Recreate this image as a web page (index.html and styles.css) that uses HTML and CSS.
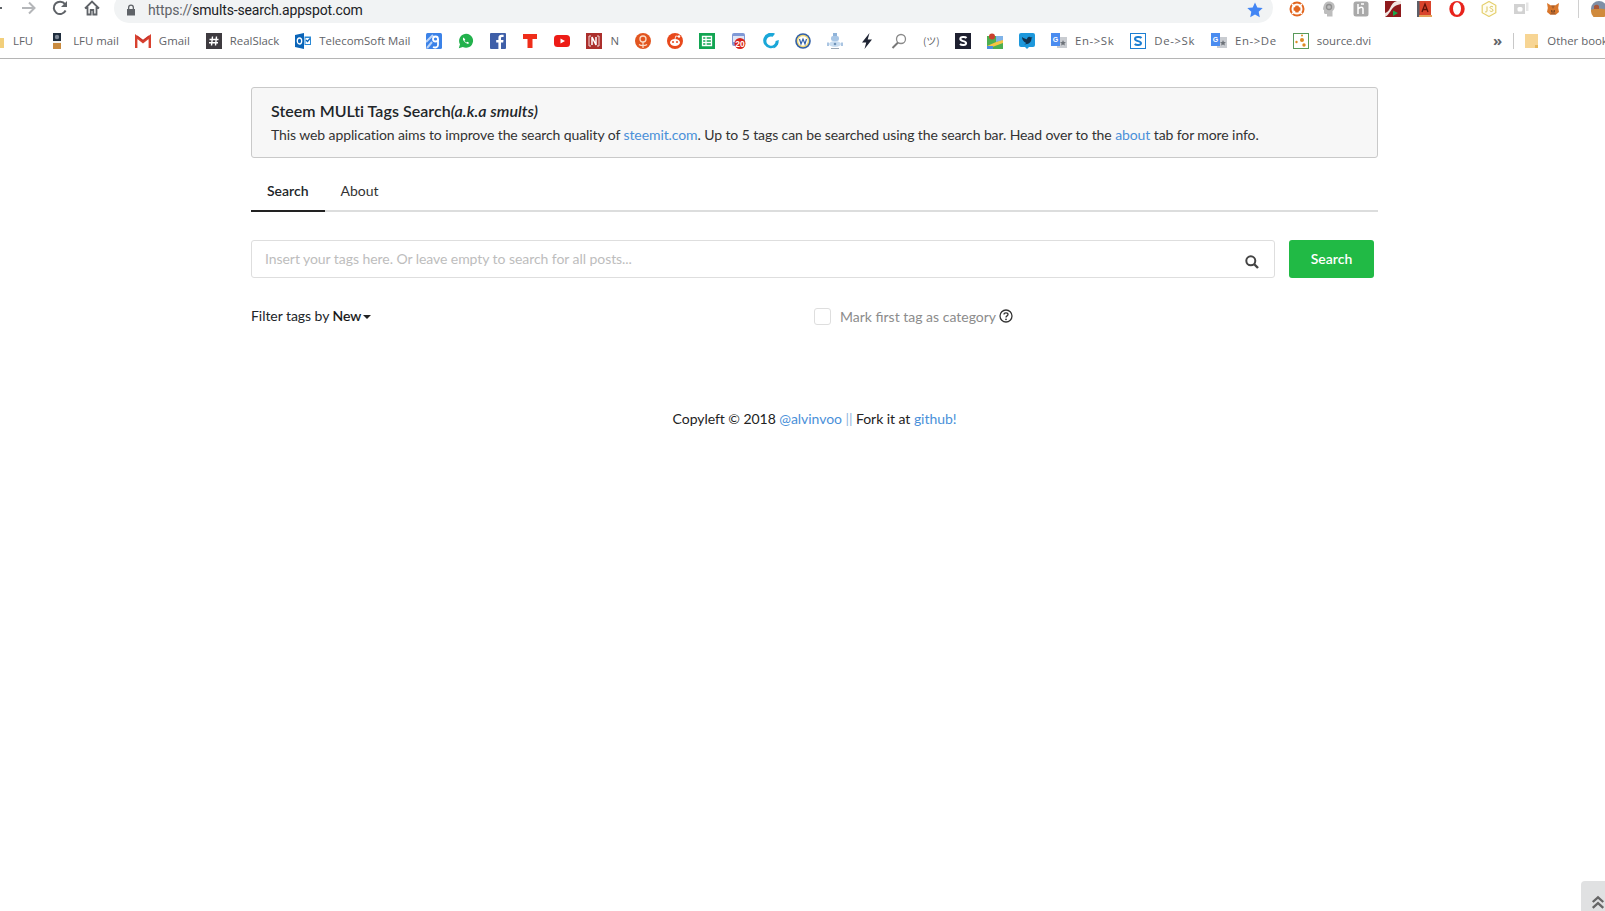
FILE: index.html
```html
<!DOCTYPE html>
<html lang="en">
<head>
<meta charset="utf-8">
<title>Steem MULti Tags Search</title>
<link rel="stylesheet" href="styles.css">
</head>
<body>
<header class="chrome">
  <div class="toolbar">
    <svg class="nav nav-back" viewBox="0 0 16 16"><path d="M15 8H3M8 2.500 2.500 8 8 13.500" fill="none" stroke="#5f6368" stroke-width="2"/></svg>
    <svg class="nav nav-fwd" viewBox="0 0 16 16"><path d="M1 8h12.500M8 2.500 13.500 8 8 13.500" fill="none" stroke="#b4b6b9" stroke-width="2"/></svg>
    <svg class="nav nav-reload" viewBox="0 0 16 16"><path d="M13.600 10.500A6.200 6.200 0 1 1 13 4.200" fill="none" stroke="#5f6368" stroke-width="2"/><path d="M15 1v6H9z" fill="#5f6368"/></svg>
    <svg class="nav nav-home" viewBox="0 0 16 16"><path d="M1 8.500 8 1.500l7 7M3.500 7v7.500h3.200V10h2.600v4.500h3.200V7" fill="none" stroke="#5f6368" stroke-width="1.800"/></svg>
    <div class="omnibox">
      <svg class="lock" viewBox="0 0 10 12"><path d="M2 5V3.500a3 3 0 0 1 6 0V5h1v6.500H1V5zm1.300 0h3.400V3.500a1.700 1.700 0 0 0-3.400 0z" fill="#5f6368"/></svg>
      <span class="url"><span class="url-scheme">https://</span>smults-search.appspot.com</span>
      <svg class="star" viewBox="0 0 16 16"><path d="M8 .5l2.300 5 5.400.6-4 3.700 1.100 5.400L8 12.500l-4.800 2.700 1.100-5.400-4-3.700 5.400-.6z" fill="#4285f4"/></svg>
    </div>
    <div class="exts">
      <svg class="ic" viewBox="0 0 16 16"><circle cx="8" cy="8" r="7.500" fill="#e2661f"/><circle cx="8" cy="8" r="4.500" fill="none" stroke="#fff" stroke-width="2"/><path d="M3 3l3 3M13 3l-3 3M3 13l3-3M13 13l-3-3" stroke="#fff" stroke-width="1.500"/></svg>
      <svg class="ic ic-narrow" viewBox="0 0 12 16"><path d="M6 .5c3.500 0 5.700 2.300 5.700 5.300 0 2-1 3.200-2.200 4.200V15.500H4V13H2.500C1.500 13 1 12.300 1 11.500V9L0 8.500C.5 3 2.500.5 6 .5z" fill="#bdbdbd"/><circle cx="6" cy="6" r="2.500" fill="none" stroke="#8f8f8f" stroke-width="1.300"/></svg>
      <svg class="ic" viewBox="0 0 16 16"><rect x=".5" y=".5" width="15" height="15" rx="2.500" fill="#a9a9a9"/><path d="M5 3v10M5 8c2-2.500 5-2.500 5 0v5M8 3h3" fill="none" stroke="#fff" stroke-width="1.500"/></svg>
      <svg class="ic" viewBox="0 0 16 16"><rect width="16" height="16" fill="#8e1a1c"/><path d="M0 16C7 12 5 5 16 3V0H12C4 2 7 10 0 12z" fill="#f1e6e2"/><path d="M8 9.500l5 2.500-5 3z" fill="#19a84a"/></svg>
      <svg class="ic" viewBox="0 0 16 16"><rect width="14" height="15" fill="#d9442c"/><rect width="2.500" height="16" fill="#5c5f68"/><path d="M5 11 8 3l3 8M6.200 8.500h3.600" fill="none" stroke="#5e1208" stroke-width="1.300"/><rect x="2" y="14" width="13" height="2" fill="#e4a35b"/></svg>
      <svg class="ic" viewBox="0 0 16 16"><ellipse cx="8" cy="8" rx="7.700" ry="8" fill="#e8231c"/><ellipse cx="8" cy="7.500" rx="4" ry="6.300" fill="#fff"/></svg>
      <svg class="ic" viewBox="0 0 16 16"><path d="M8 .5 14.800 4.300v7.400L8 15.500 1.200 11.700V4.300z" fill="#fffdf2" stroke="#e5cf6c" stroke-width="1.200"/><path d="M6 5.500V10c0 1.200-1.500 1.200-2 .5M12 6c-1-1-3-.8-3 .5s3 1 3 2.700-2.300 1.500-3.300.5" fill="none" stroke="#dcc65e" stroke-width="1"/></svg>
      <svg class="ic" viewBox="0 0 16 16"><path d="M1 3h11v10H1z" fill="#d2d2d2"/><path d="M13 1.500h2.500V10H13z" fill="#e6e6e6"/><rect x="4.500" y="6" width="5" height="4.500" rx="1.500" fill="#fff"/></svg>
      <svg class="ic ic-narrow" viewBox="0 0 12 16"><path d="M0 2l4 2.500h4L12 2l-.8 5 .8 4-3 2.500H3L0 11l.8-4z" fill="#d9772c"/><path d="M4 4.500 6 8l2-3.500zM3 13.500 6 9l3 4.500z" fill="#a85f2c"/><path d="M4 10h1.200M6.800 10H8" stroke="#2b2520" stroke-width="1.200"/></svg>
      <span class="ext-sep"></span>
      <svg class="avatar" viewBox="0 0 16 16"><circle cx="8" cy="8" r="8" fill="#7f8fa6"/><path d="M0 9c4-2 11-2 16 0v1a8 8 0 0 1-16 0z" fill="#d08a3c"/><path d="M3 5c2-2 4-1 5 0v3H3z" fill="#a9573a"/></svg>
    </div>
  </div>
  <nav class="bookmarks">
    <a class="bm bm-first"><svg class="ic" viewBox="0 0 16 16"><path d="M1 3h6l2 2h6v10H1z" fill="#f2cf7b"/></svg><span>LFU</span></a>
    <a class="bm"><svg class="ic" viewBox="0 0 16 16"><rect x="4" width="8" height="8" fill="#1f2d3d"/><circle cx="8" cy="4" r="2.200" fill="#7d8896"/><rect x="4" y="8" width="8" height="2" fill="#f2f2f2"/><rect x="4" y="10" width="8" height="6" fill="#c98a3e"/></svg><span>LFU mail</span></a>
    <a class="bm"><svg class="ic" viewBox="0 0 16 16"><path d="M1.200 15V3.500L8 9l6.800-5.500V15" fill="none" stroke="#d8412f" stroke-width="2.400"/><path d="M2 3 8 7.500 14 3" fill="none" stroke="#c8322a" stroke-width="1.200"/></svg><span>Gmail</span></a>
    <a class="bm"><svg class="ic" viewBox="0 0 16 16"><rect width="16" height="16" fill="#3e3b40"/><path d="M6.500 3.500 5.500 12.500M10.500 3.500l-1 9M3.500 6.500h9M3 9.800h9" stroke="#fff" stroke-width="1.400"/></svg><span>RealSlack</span></a>
    <a class="bm"><svg class="ic" viewBox="0 0 16 16"><path d="M0 2 9 0v16L0 14z" fill="#0a64b8"/><ellipse cx="4.500" cy="8" rx="2.200" ry="3" fill="none" stroke="#fff" stroke-width="1.300"/><path d="M9.500 3.500H16V12H9.500z" fill="#2b8ad6"/><path d="M10.500 5h4.500v6h-4.500z" fill="#fff"/><path d="M11 7l1.500 1.500L15 5.500" fill="none" stroke="#0a64b8" stroke-width="1.200"/></svg><span>TelecomSoft Mail</span></a>
    <a class="bm"><svg class="ic" viewBox="0 0 16 16"><rect width="16" height="16" rx="1.500" fill="#3b82e8"/><path d="M0 9 7 2M1 15l5-6" stroke="#bcd4f7" stroke-width="2"/><circle cx="9.500" cy="6" r="2.500" fill="none" stroke="#fff" stroke-width="1.800"/><path d="M12 6v6c0 2.500-3 3-5 2" fill="none" stroke="#fff" stroke-width="1.800"/></svg></a>
    <a class="bm"><svg class="ic" viewBox="0 0 16 16"><path d="M.8 15.200 2 11.300A7 7 0 1 1 4.800 14z" fill="#22b14c"/><path d="M5.500 4.500c-1.500 1.500.3 3.800 1.500 4.800 1.300 1.200 3.300 2.300 4.200.8l-1.700-1.400-1 .7C7.500 9.300 6.800 8.500 6.500 7.600l.8-1z" fill="#fff"/></svg></a>
    <a class="bm"><svg class="ic" viewBox="0 0 16 16"><rect width="16" height="16" rx="1" fill="#3f5fa8"/><path d="M11 16V9.500h2.200l.3-2.600H11V5.300c0-.8.300-1.200 1.300-1.200h1.300V1.800h-2C9.500 1.800 8.400 3 8.400 5v1.900H6.200v2.600h2.200V16z" fill="#fff"/></svg></a>
    <a class="bm"><svg class="ic" viewBox="0 0 16 16"><path d="M1 1h14v5h-4.500v9h-5V6H1z" fill="#ef2d1a"/></svg></a>
    <a class="bm"><svg class="ic" viewBox="0 0 16 16"><rect y="2" width="16" height="12" rx="3.500" fill="#ed1c16"/><path d="M6.500 5.500 11 8l-4.500 2.500z" fill="#fff"/></svg></a>
    <a class="bm"><svg class="ic" viewBox="0 0 16 16"><rect width="16" height="16" fill="#ab2f2c"/><path d="M5 3H3v10h2M11 3h2v10h-2" fill="none" stroke="#f3d9d7" stroke-width="1"/><path d="M6 12V4l4 8V4" fill="none" stroke="#fff" stroke-width="1.500"/></svg><span>N</span></a>
    <a class="bm"><svg class="ic" viewBox="0 0 16 16"><circle cx="8" cy="8" r="8" fill="#e2551f"/><circle cx="8" cy="6" r="3" fill="none" stroke="#fbdcc7" stroke-width="1.300"/><path d="M8 9v6M4 11.500c2 1.500 6 1.500 8 0" fill="none" stroke="#fbdcc7" stroke-width="1.200"/></svg></a>
    <a class="bm"><svg class="ic" viewBox="0 0 16 16"><circle cx="8" cy="8" r="8" fill="#e8491c"/><ellipse cx="8" cy="9.500" rx="5" ry="3.500" fill="#fff"/><circle cx="6" cy="9" r="1" fill="#e8491c"/><circle cx="10" cy="9" r="1" fill="#e8491c"/><circle cx="12" cy="3.500" r="1.200" fill="#fff"/><path d="M8 6 8.800 3l3 .5" fill="none" stroke="#fff" stroke-width=".8"/></svg></a>
    <a class="bm"><svg class="ic" viewBox="0 0 16 16"><rect width="16" height="16" fill="#12a552"/><path d="M3.500 3.500h9v9h-9zM3.500 6.500h9M3.500 9.500h9M7 3.500v9" fill="none" stroke="#fff" stroke-width="1.300"/></svg></a>
    <a class="bm"><svg class="ic" viewBox="0 0 16 16"><rect x="1" width="13" height="13" rx="2" fill="#8099d6"/><rect x="2" y="3" width="11" height="6" fill="#dfe5f5"/><circle cx="9" cy="10.500" r="5.500" fill="#d8231b"/><text class="cal-num" x="9" y="13.500" text-anchor="middle">20</text></svg></a>
    <a class="bm"><svg class="ic" viewBox="0 0 16 16"><path d="M12 .8A7.800 7.800 0 1 0 15.800 7l-3.200 1a4.600 4.600 0 1 1-3-4.200z" fill="#1aa7d8"/><path d="M15.500 9c-.3 3-2.300 5.500-5 6.500l1.500-3z" fill="#1aa7d8"/></svg></a>
    <a class="bm"><svg class="ic" viewBox="0 0 16 16"><circle cx="8" cy="8" r="7.800" fill="#315fa8"/><circle cx="8" cy="8" r="6.200" fill="#f0d876"/><circle cx="8" cy="8" r="4.800" fill="#fff"/><path d="M4.500 6 6 11l2-5 2 5 1.500-5" fill="none" stroke="#315fa8" stroke-width="1.200"/></svg></a>
    <a class="bm"><svg class="ic" viewBox="0 0 16 16"><rect x="6" width="4" height="3" fill="#8fb3d9"/><rect x="4" y="3" width="8" height="5" rx="2" fill="#a8c6e5"/><ellipse cx="8" cy="11" rx="6" ry="3" fill="#c9ddf0"/><path d="M1 13V9.500M15 13V9.500" stroke="#8fb3d9" stroke-width="1.500"/><rect x="4" y="15" width="8" height="1" fill="#9aa7b5"/><circle cx="8" cy="11" r="1.300" fill="#6f93b8"/></svg></a>
    <a class="bm"><svg class="ic" viewBox="0 0 16 16"><path d="M10.500 0 3 9.500h4.200L5.500 16 13 6.500H8.700z" fill="#1f2433"/></svg></a>
    <a class="bm"><svg class="ic" viewBox="0 0 16 16"><circle cx="10" cy="6" r="4.500" fill="none" stroke="#8a8a8a" stroke-width="1.300"/><path d="M7 9.500 1.500 15" stroke="#777" stroke-width="2"/></svg></a>
    <a class="bm"><span class="bm-glyph">(ツ)</span></a>
    <a class="bm"><svg class="ic" viewBox="0 0 16 16"><rect width="16" height="16" fill="#1e2030"/><path d="M11.500 5C10.500 3.800 5.300 3.500 5.300 6c0 2.800 5.800 1.500 5.800 4.300 0 2.200-4.800 2-6.100.7" fill="none" stroke="#fff" stroke-width="2"/></svg></a>
    <a class="bm"><svg class="ic" viewBox="0 0 16 16"><rect y="3" width="16" height="13" fill="#4caf50"/><path d="M0 13 16 6v4L0 16z" fill="#f6c344"/><path d="M9 3h7v4L9 9z" fill="#7fb3e8"/><path d="M0 13h6v3H0z" fill="#4b8fe0"/><circle cx="5" cy="3.500" r="3" fill="#c9402e"/></svg></a>
    <a class="bm"><svg class="ic" viewBox="0 0 16 16"><rect width="16" height="14" rx="2" fill="#1d98dc"/><path d="M6 14h4l-2 2z" fill="#1d98dc"/><path d="M3 4c2 1.500 3.500 2 5 2.200C8 3.800 10.500 3 12 4.500l1.500-.5-1 1.500C12.500 9 9.500 12 5 11c1 0 2-.5 2.500-1C5.500 9.500 3 7 3 4z" fill="#12334f"/></svg></a>
    <a class="bm"><svg class="ic" viewBox="0 0 16 16"><rect x="6" y="4" width="10" height="11" fill="#c9ccd1"/><path d="M0 0h9v13H0z" fill="#4a8cf0"/><text class="g-letter" x="4.500" y="9" text-anchor="middle">G</text><path d="M12 7l.9 2 2 .2-1.500 1.400.5 2-1.900-1-1.900 1 .5-2L9 9.200l2.200-.2z" fill="#6d7278"/></svg><span class="wide">En-&gt;Sk</span></a>
    <a class="bm"><svg class="ic" viewBox="0 0 16 16"><rect x=".5" y=".5" width="15" height="15" fill="#fff" stroke="#1c7ed2"/><path d="M11.500 5C10.500 3.800 5 3.500 5 6c0 2.800 6 1.500 6 4.300 0 2.200-5 2-6.300.7" fill="none" stroke="#1c7ed2" stroke-width="2"/></svg><span class="wide">De-&gt;Sk</span></a>
    <a class="bm"><svg class="ic" viewBox="0 0 16 16"><rect x="6" y="4" width="10" height="11" fill="#c9ccd1"/><path d="M0 0h9v13H0z" fill="#4a8cf0"/><text class="g-letter" x="4.500" y="9" text-anchor="middle">G</text><path d="M12 7l.9 2 2 .2-1.500 1.400.5 2-1.900-1-1.900 1 .5-2L9 9.200l2.200-.2z" fill="#6d7278"/></svg><span class="wide">En-&gt;De</span></a>
    <a class="bm"><svg class="ic" viewBox="0 0 16 16"><rect x=".5" y=".5" width="15" height="15" fill="#fff" stroke="#5a9a5a"/><circle cx="9" cy="7" r="2" fill="#dd8a24"/><circle cx="3.500" cy="9" r="1.200" fill="#dd8a24"/><circle cx="11" cy="12" r="1.700" fill="#dd8a24"/><circle cx="9" cy="2.500" r="1" fill="#dd8a24"/></svg><span>source.dvi</span></a>
    <a class="bm bm-more"><span class="more-glyph">»</span></a>
    <span class="bm-sep"></span>
    <a class="bm bm-other"><svg class="ic ic-folder" viewBox="0 0 14 16"><path d="M0 1h13v14H0z" fill="#f7d594"/><path d="M13 12v3h-3v-3z" fill="#e8b85a"/></svg><span>Other bookmarks</span></a>
  </nav>
</header>

<main class="page">
  <section class="intro">
    <h1 class="intro-title">Steem MULti Tags Search<em>(a.k.a smults)</em></h1>
    <p class="intro-text">This web application aims to improve the search quality of <a href="#">steemit.com</a>. Up to 5 tags can be searched using the search bar. Head over to the <a href="#">about</a> tab for more info.</p>
  </section>

  <div class="tabs">
    <a class="tab tab-active">Search</a>
    <a class="tab">About</a>
  </div>

  <form class="search-row">
    <div class="search-field">
      <input class="search-input" type="text" placeholder="Insert your tags here. Or leave empty to search for all posts...">
      <svg class="search-icon" viewBox="0 0 14 14"><circle cx="5.800" cy="5.800" r="4.500" fill="none" stroke="#444" stroke-width="2"/><path d="M9 9l4 4" stroke="#444" stroke-width="2.400"/></svg>
    </div>
    <button class="search-btn" type="button">Search</button>
  </form>

  <div class="options">
    <div class="filter">Filter tags by <strong>New</strong><span class="caret"></span></div>
    <label class="mark">
      <input class="mark-box" type="checkbox">
      <span>Mark first tag as category</span>
      <svg class="help" viewBox="0 0 14 14"><circle cx="7" cy="7" r="6" fill="none" stroke="#333" stroke-width="1.300"/><path d="M5 5.500C5 3.400 9 3.400 9 5.500 9 7 7 6.800 7 8.500" fill="none" stroke="#333" stroke-width="1.300"/><circle cx="7" cy="10.300" r=".9" fill="#333"/></svg>
    </label>
  </div>

  <footer class="foot">Copyleft © 2018 <a href="#">@alvinvoo</a> <span class="bars">||</span> Fork it at <a href="#">github</a><span class="bang">!</span></footer>
</main>

<div class="to-top"><svg viewBox="0 0 12 12"><path d="M1.500 6 6 2l4.500 4M1.500 11 6 7l4.500 4" fill="none" stroke="#666" stroke-width="2"/></svg></div>
</body>
</html>
```

FILE: styles.css
```css
* { box-sizing: border-box; }
html, body { height: 100%; }
body {
  margin: 0;
  background: #fff;
  color: #212529;
  font-family: Lato, "Liberation Sans", sans-serif;
  font-size: 14px;
  overflow: hidden;
}

/* browser chrome */
.chrome { border-bottom: 1px solid #b5b5b5; height: 59px; background: #fff; }
.toolbar { display: flex; align-items: center; height: 23px; overflow: hidden; position: relative; }
.nav { width: 16px; height: 16px; flex: none; margin-top: -7px; }
.nav-back { margin-left: -13px; }
.nav-fwd { margin-left: 18px; }
.nav-reload { margin-left: 15px; }
.nav-home { margin-left: 16px; }
.omnibox {
  display: flex; align-items: center; flex: none;
  width: 1159px; height: 30px; margin: -7px 0 0 14px; padding: 5px 10px 0 12px;
  background: #f1f3f4; border-radius: 15px;
}
.lock { width: 10px; height: 12px; flex: none; margin-top: -2px; }
.url { flex: 1; margin-left: 12px; margin-top: -2px; font-family: Roboto, sans-serif; font-size: 14px; letter-spacing: -.15px; color: #202124; }
.url-scheme { color: #5f6368; }
.star { width: 16px; height: 16px; margin-top: -2px; }
.exts { display: flex; align-items: center; gap: 16px; margin-left: 16px; margin-top: -6px; flex: none; }
.ic { width: 16px; height: 16px; flex: none; display: block; }
.ic-narrow { width: 12px; margin: 0 2px; }
.ext-sep { width: 1px; height: 18px; background: #d0d0d0; margin-left: 1px; }
.avatar { width: 16px; height: 16px; margin-left: -4px; flex: none; }

.bookmarks { display: flex; align-items: center; gap: 16px; height: 35px; overflow: hidden; white-space: nowrap; }
.bm { display: flex; align-items: center; gap: 8px; flex: none; font-family: "Open Sans", sans-serif; font-size: 11.400px; color: #5f6368; }
.wide { letter-spacing: .6px; }
.bm-first { margin-left: -1px; }
.bm-first .ic { margin-left: -10px; }
.bm-glyph { width: 16px; font-size: 10px; text-align: center; font-family: "Noto Sans CJK JP", sans-serif; }
.bm-more { margin-left: 106px; }
.more-glyph { font-size: 15px; font-weight: 700; line-height: 1; }
.bm-sep { width: 1px; height: 16px; background: #c8c8c8; margin: 0 -5px; flex: none; }
.ic-folder { width: 14px; }
.cal-num { font-family: "Liberation Sans", sans-serif; font-weight: 700; font-size: 8.500px; fill: #fff; }
.g-letter { font-family: "Liberation Sans", sans-serif; font-weight: 700; font-size: 7px; fill: #fff; }

/* page */
.page { width: 1127px; margin: 28px 0 0 251px; }
.intro {
  height: 71px; padding: 12px 19px 0 20px;
  background: #f7f7f7; border: 1px solid #c9c9c9; border-radius: 3px;
}
.intro-title { margin: 0 0 0 -1px; font-size: 16px; line-height: 21px; font-weight: 600; color: #212529; letter-spacing: .04px; }
.intro-title em { font-style: italic; }
.intro-text { margin: 2px 0 0 -1px; line-height: 24px; color: #333; letter-spacing: -.095px; }
.intro-text a, .foot a { color: #4a90d9; text-decoration: none; }

.tabs { display: flex; height: 54px; padding-top: 22px; border-bottom: 2px solid #dcdddd; }
.tab { height: 32px; padding: 0 16px; line-height: 22px; color: #333; margin-bottom: -2px; }
.tab-active { font-weight: 600; color: #212529; border-bottom: 2px solid #222; height: 32px; }

.search-row { display: flex; gap: 14px; margin-top: 28px; width: 1123px; }
.search-field {
  flex: 1; display: flex; align-items: center; height: 38px; padding: 0 15px 0 14px;
  border: 1px solid #dedede; border-radius: 3px; background: #fff;
}
.search-input { flex: 1; border: 0; outline: 0; padding: 0 0 2px; margin-left: -1px; font: inherit; letter-spacing: -.06px; color: #333; background: none; }
.search-input::placeholder { color: #bdbdbd; opacity: 1; }
.search-icon { width: 14px; height: 14px; margin-top: 6px; }
.search-btn {
  width: 85px; height: 38px; border: 0; border-radius: 3px; padding: 0 0 2px;
  background: #21ba45; color: #fff; font: 600 14px Lato, sans-serif;
}

.options { display: flex; align-items: center; height: 18px; margin-top: 29px; }
.filter { width: 563px; margin-top: -2px; color: #212529; letter-spacing: -.05px; }
.filter strong { font-weight: 400; color: #111; -webkit-text-stroke: .2px #111; }
.caret {
  display: inline-block; margin-left: 2px; vertical-align: 2px;
  border-top: 4px solid #222; border-left: 4px solid transparent; border-right: 4px solid transparent;
}
.mark { display: flex; align-items: center; color: #8c8c8c; }
.mark-box {
  appearance: none; width: 17px; height: 17px; margin: 0 9px 0 0;
  border: 1px solid #dedede; border-radius: 3px; background: #fff;
}
.help { width: 14px; height: 14px; margin-left: 3px; }

.foot { margin-top: 84px; text-align: center; line-height: 20px; color: #222; letter-spacing: -.05px; }
.bars { color: #8fb6de; }
.bang { color: #4a90d9; }

.to-top {
  position: fixed; right: -10px; bottom: -10px; width: 34px; height: 40px;
  padding: 14px 0 0 10px;
  background: #e0e1e2; border-radius: 4px 0 0 0;
}
.to-top svg { width: 14px; height: 14px; display: block; }
```
